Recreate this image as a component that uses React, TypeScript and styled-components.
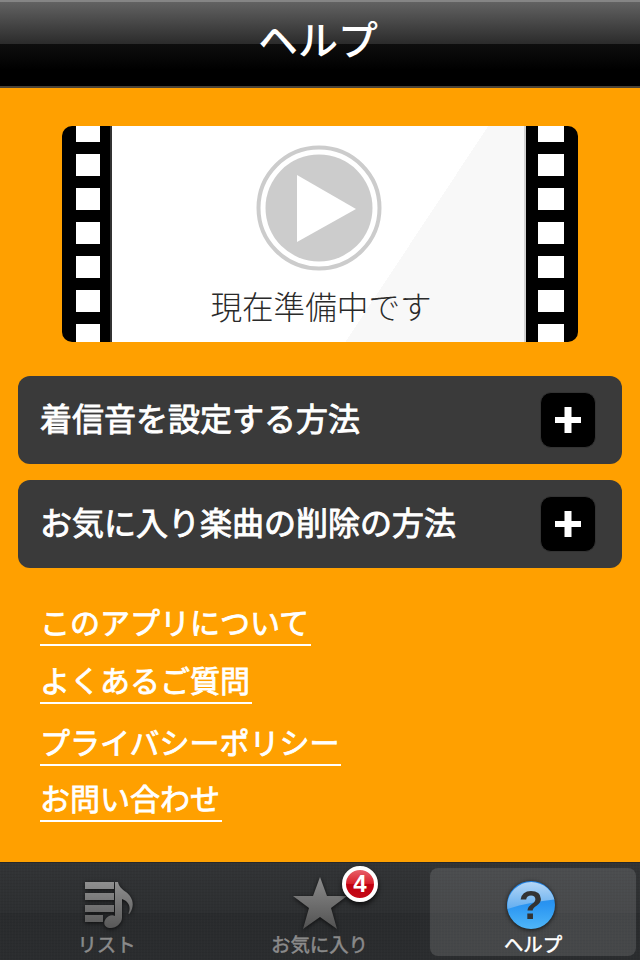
import React from "react";
import styled, { createGlobalStyle } from "styled-components";

const GlobalStyle = createGlobalStyle`
  html, body {
    margin: 0;
    padding: 0;
    background: #000;
  }
  * {
    box-sizing: border-box;
  }
`;

const FONT = `"Noto Sans CJK JP", "Noto Sans", sans-serif`;

const Screen = styled.div`
  width: 640px;
  height: 960px;
  display: flex;
  flex-direction: column;
  overflow: hidden;
  font-family: ${FONT};
`;

const NavBar = styled.header`
  height: 88px;
  flex: none;
  display: flex;
  justify-content: center;
  padding: 7px 4px 0 0;
  border-top: 2px solid #858585;
  border-bottom: 2px solid #4a4338;
  background: linear-gradient(
    to bottom,
    #626262 0,
    #2b2b2b 42px,
    #0e0e0e 42px,
    #000 68px
  );
`;

const NavTitle = styled.h1`
  margin: 0;
  color: #fff;
  font-size: 40px;
  line-height: 58px;
  font-weight: 500;
`;

const Content = styled.main`
  flex: 1;
  background: #ffa000;
  padding: 38px 18px 0;
`;

const Film = styled.div`
  width: 516px;
  height: 216px;
  margin: 0 auto;
  display: flex;
  border-radius: 10px;
  overflow: hidden;
`;

const Strip = styled.div<{ $side: "left" | "right" }>`
  flex: none;
  display: flex;
  flex-direction: column;
  gap: 12px;
  background: #000;
  width: ${(p) => (p.$side === "left" ? "50px" : "54px")};
  padding-left: ${(p) => (p.$side === "left" ? "14px" : "12px")};
  border-left: ${(p) => (p.$side === "right" ? "2px solid #d4d4d4" : "none")};
  border-right: ${(p) => (p.$side === "left" ? "2px solid #333" : "none")};
`;

const Hole = styled.div<{ $h: number; $w: number }>`
  flex: none;
  width: ${(p) => p.$w}px;
  height: ${(p) => p.$h}px;
  background: #fff;
`;

const FilmPanel = styled.div`
  flex: 1;
  display: flex;
  flex-direction: column;
  align-items: center;
  padding-top: 19px;
  background: linear-gradient(123.5deg, #fff 67.8%, #f8f8f8 67.8%);
`;

const PlayIcon = styled.svg`
  display: block;
  margin-left: 2px;
`;

const FilmCaption = styled.div`
  margin: 11px 0 0 6px;
  color: #2a2a2a;
  font-size: 31.6px;
  line-height: 46px;
  font-weight: 300;
  white-space: nowrap;
`;

const Rows = styled.div`
  margin-top: 34px;
  display: flex;
  flex-direction: column;
  gap: 16px;
`;

const Row = styled.div`
  height: 88px;
  display: flex;
  align-items: center;
  justify-content: space-between;
  padding: 0 26px 0 22px;
  border-radius: 12px;
  background: #3a3a3a;
`;

const RowLabel = styled.span`
  margin-bottom: 7px;
  color: #fff;
  font-size: 32px;
  font-weight: 400;
  -webkit-text-stroke: 0.9px #fff;
  white-space: nowrap;
`;

const PlusButton = styled.div`
  width: 56px;
  height: 56px;
  flex: none;
  display: flex;
  align-items: center;
  justify-content: center;
  border-radius: 11px;
  background: #000;
  border: 1px solid #333;
`;

const Links = styled.nav`
  margin-top: 28px;
  padding-left: 22px;
  display: flex;
  flex-direction: column;
  align-items: flex-start;
`;

const LinkItem = styled.a<{ $top: number }>`
  display: inline-block;
  margin-top: ${(p) => p.$top}px;
  padding: 0 2px 0 0;
  height: 50px;
  line-height: 50px;
  color: #fff;
  font-size: 30px;
  font-weight: 400;
  -webkit-text-stroke: 0.8px #fff;
  white-space: nowrap;
  border-bottom: 2px solid #fff;
`;

const TabBar = styled.footer`
  height: 98px;
  flex: none;
  display: grid;
  grid-template-columns: 213px 213px 1fr;
  padding: 6px 4px 4px 0;
  background-color: #2e3032;
  background-image: repeating-linear-gradient(
      to right,
      rgba(255, 255, 255, 0.012) 0 1px,
      transparent 1px 3px
    ),
    repeating-linear-gradient(
      to bottom,
      rgba(0, 0, 0, 0.05) 0 1px,
      transparent 1px 3px
    ),
    linear-gradient(to bottom, #323436 0, #2d2f31 52%, #292b2d 52%, #2b2d2f 100%);
  box-shadow: inset 0 1px 0 #26282a;
`;

const Tab = styled.div<{ $active?: boolean }>`
  position: relative;
  display: flex;
  flex-direction: column;
  align-items: center;
  height: 88px;
  margin-left: ${(p) => (p.$active ? "4px" : "0")};
  border-radius: 8px;
  background: ${(p) => (p.$active ? "rgba(255, 255, 255, 0.13)" : "transparent")};
`;

const TabIcon = styled.svg<{ $top: number; $left?: number }>`
  display: block;
  flex: none;
  margin-top: ${(p) => p.$top}px;
  margin-left: ${(p) => p.$left ?? 0}px;
  filter: drop-shadow(0 1px 2px rgba(0, 0, 0, 0.7));
`;

const TabLabel = styled.span<{ $active?: boolean }>`
  position: absolute;
  left: 0;
  right: 0;
  bottom: -3px;
  text-align: center;
  color: ${(p) => (p.$active ? "#fff" : "#8b8b8b")};
  font-size: 19.4px;
  line-height: 30px;
  font-weight: 400;
  -webkit-text-stroke: 0.5px ${(p) => (p.$active ? "#fff" : "#8b8b8b")};
`;

const Badge = styled.div`
  position: absolute;
  top: -2px;
  left: 129px;
  width: 36px;
  height: 36px;
  display: flex;
  align-items: center;
  justify-content: center;
  border-radius: 50%;
  border: 4px solid #fff;
  background: linear-gradient(to bottom, #e8606a 0, #d8202c 48%, #c00010 52%, #c40a18 100%);
  box-shadow: 0 3px 5px rgba(0, 0, 0, 0.7);
  color: #fff;
  font-family: "Liberation Sans", sans-serif;
  font-size: 24px;
  font-weight: 700;
  line-height: 1;
`;

function FilmStrip({ side }: { side: "left" | "right" }) {
  const w = side === "left" ? 24 : 26;
  return (
    <Strip $side={side}>
      {[16, 22, 22, 22, 22, 22, 18].map((h, i) => (
        <Hole key={i} $h={h} $w={w} />
      ))}
    </Strip>
  );
}

function Play() {
  return (
    <PlayIcon width="126" height="126" viewBox="0 0 126 126">
      <circle cx="63" cy="63" r="60.5" fill="none" stroke="#ccc" strokeWidth="4" />
      <circle cx="63" cy="63" r="53.5" fill="#ccc" />
      <polygon points="41,30 41,97 100,64" fill="#fff" />
    </PlayIcon>
  );
}

function Plus() {
  return (
    <svg width="26" height="26" viewBox="0 0 26 26">
      <path d="M9.5 0h7v10h9.5v6h-9.5v10h-7v-10H0v-6h9.5z" fill="#fff" />
    </svg>
  );
}

function ListIcon() {
  return (
    <TabIcon $top={13} $left={7} width="52" height="50" viewBox="0 0 52 50">
      <defs>
        <linearGradient id="listFill" x1="0" y1="0" x2="0" y2="1">
          <stop offset="0" stopColor="#8f8f8f" />
          <stop offset="1" stopColor="#585858" />
        </linearGradient>
      </defs>
      <path
        fill="url(#listFill)"
        d="M1 1h29v7H1zM1 12h29v7H1zM1 24h29v7H1zM1 34h18v7H1zM31 1h3c1 5 4 7 8 10 5 4 10 11 4 21-1 2-2 1-1-1 2-6-1-11-7-13v19c0 5-6 10-11 10-6 0-8-4-6-8 2-4 7-6 10-4z"
      />
    </TabIcon>
  );
}

function StarIcon() {
  return (
    <TabIcon $top={8} width="56" height="54" viewBox="0 0 56 54">
      <defs>
        <linearGradient id="starFill" x1="0" y1="0" x2="0" y2="1">
          <stop offset="0" stopColor="#8c8c8c" />
          <stop offset="1" stopColor="#525252" />
        </linearGradient>
      </defs>
      <polygon
        fill="url(#starFill)"
        points="28,1 35,20 55,20 39,32 45,53 28,41 11,53 17,32 1,20 21,20"
      />
    </TabIcon>
  );
}

function HelpIcon() {
  return (
    <TabIcon $top={12} $left={-4} width="50" height="50" viewBox="0 0 50 50">
      <defs>
        <linearGradient id="helpBlue" x1="0" y1="0" x2="0" y2="1">
          <stop offset="0" stopColor="#1f7fe0" />
          <stop offset="0.5" stopColor="#2a95f2" />
          <stop offset="1" stopColor="#4fb6f8" />
        </linearGradient>
        <linearGradient id="helpGloss" x1="0" y1="0" x2="0" y2="1">
          <stop offset="0" stopColor="#b4d6f6" />
          <stop offset="1" stopColor="#62aef0" />
        </linearGradient>
      </defs>
      <circle cx="25" cy="25" r="24" fill="url(#helpBlue)" />
      <path d="M1.5 29A24 24 0 0 1 48.4 19.5C33 21 17 24 1.5 29z" fill="url(#helpGloss)" />
      <text
        x="25"
        y="39"
        textAnchor="middle"
        fontFamily="'Liberation Sans', sans-serif"
        fontWeight="700"
        fontSize="40"
        fill="#333"
      >
        ?
      </text>
    </TabIcon>
  );
}

const rows = ["着信音を設定する方法", "お気に入り楽曲の削除の方法"];

const links = [
  { label: "このアプリについて", top: 0 },
  { label: "よくあるご質問", top: 8 },
  { label: "プライバシーポリシー", top: 12 },
  { label: "お問い合わせ", top: 6 },
];

export default function App() {
  return (
    <Screen>
      <GlobalStyle />
      <NavBar>
        <NavTitle>ヘルプ</NavTitle>
      </NavBar>
      <Content>
        <Film>
          <FilmStrip side="left" />
          <FilmPanel>
            <Play />
            <FilmCaption>現在準備中です</FilmCaption>
          </FilmPanel>
          <FilmStrip side="right" />
        </Film>
        <Rows>
          {rows.map((label) => (
            <Row key={label}>
              <RowLabel>{label}</RowLabel>
              <PlusButton>
                <Plus />
              </PlusButton>
            </Row>
          ))}
        </Rows>
        <Links>
          {links.map((l) => (
            <LinkItem key={l.label} $top={l.top}>
              {l.label}
            </LinkItem>
          ))}
        </Links>
      </Content>
      <TabBar>
        <Tab>
          <ListIcon />
          <TabLabel>リスト</TabLabel>
        </Tab>
        <Tab>
          <StarIcon />
          <Badge>4</Badge>
          <TabLabel>お気に入り</TabLabel>
        </Tab>
        <Tab $active>
          <HelpIcon />
          <TabLabel $active>ヘルプ</TabLabel>
        </Tab>
      </TabBar>
    </Screen>
  );
}
